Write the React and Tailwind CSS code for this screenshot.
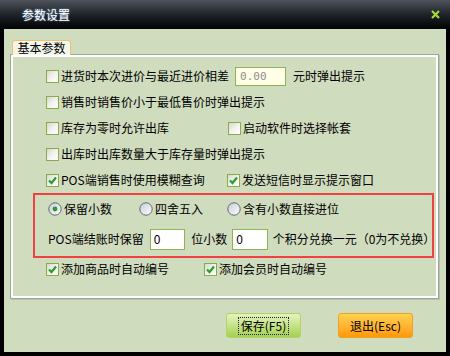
import React from 'react';

const font = "font-['Noto_Sans_CJK_SC','Noto_Sans',sans-serif]";

function Check({ checked }) {
  return (
    <span className="w-[13px] h-[13px] shrink-0 border border-[#86ad48] bg-linear-to-br from-[#d6d8cc] via-[#f2f2ee] to-white flex items-center justify-center">
      {checked && (
        <svg width="11" height="11" viewBox="0 0 11 11">
          <path d="M2 5.5 L4.5 8 L9 2.5" fill="none" stroke="#2c9c2c" strokeWidth="2.2" />
        </svg>
      )}
    </span>
  );
}

function Radio({ on }) {
  return (
    <svg width="14" height="14" viewBox="0 0 14 14" className="shrink-0">
      <defs>
        <linearGradient id="rg" x1="0" y1="0" x2="1" y2="1">
          <stop offset="0" stopColor="#c8ccd4" />
          <stop offset="1" stopColor="#ffffff" />
        </linearGradient>
      </defs>
      <circle cx="7" cy="7" r="6.2" fill="url(#rg)" stroke="#5c6878" strokeWidth="1" />
      {on && <circle cx="7" cy="7" r="2.4" fill="#2f9a2f" />}
    </svg>
  );
}

function CheckItem({ checked, label, className = '' }) {
  return (
    <div className={`flex items-center gap-[2px] ${className}`}>
      <Check checked={checked} />
      <span>{label}</span>
    </div>
  );
}

export default function App() {
  return (
    <div className={`w-[450px] h-[356px] bg-black flex flex-col text-[12px] leading-none text-black ${font}`}>
      {/* title bar */}
      <div className="h-[29px] shrink-0 flex items-center justify-between pl-[22px] pr-[10px] bg-linear-to-b from-[#4d535a] via-[#1f2429] to-[#030405]">
        <span className="text-white text-[12px] [text-shadow:0_0_2px_#8ab4e0]">参数设置</span>
        <svg width="9" height="9" viewBox="0 0 9 9">
          <path d="M1 1 L8 8 M8 1 L1 8" stroke="#a8d838" strokeWidth="2.2" />
        </svg>
      </div>

      {/* body */}
      <div className="flex-1 mx-[4px] mb-[4px] bg-[#d0dcbe] pt-[11px] pl-[6px] flex flex-col">
        <div className="relative z-10 ml-[2px] w-[59px] h-[15px] border border-b-0 border-[#f2bf6a] rounded-t-[3px] bg-[#f4f6ec] flex items-center justify-center">
          基本参数
        </div>
        <div className="-mt-[1px] w-[429px] h-[245px] border border-[#9ea69a] shadow-[1px_1px_0_#b8c0b0]">
          <div className="h-full border-2 border-white flex flex-col pt-[6px]">
            <div className="h-[26px] flex items-center pl-[33px]">
              <CheckItem label="进货时本次进价与最近进价相差" />
              <div className="ml-[6px] w-[51px] h-[19px] border border-[#8cb450] bg-[#ffffe8] flex items-center pl-[4px] text-[#8c8c8c] font-['DejaVu_Sans_Mono',monospace] text-[11px]">
                0.00
              </div>
              <span className="ml-[7px]">元时弹出提示</span>
            </div>
            <div className="h-[26px] flex items-center pl-[33px]">
              <CheckItem label="销售时销售价小于最低售价时弹出提示" />
            </div>
            <div className="h-[26px] flex items-center pl-[33px]">
              <CheckItem label="库存为零时允许出库" className="w-[182px]" />
              <CheckItem label="启动软件时选择帐套" />
            </div>
            <div className="h-[26px] flex items-center pl-[33px]">
              <CheckItem label="出库时出库数量大于库存量时弹出提示" />
            </div>
            <div className="h-[26px] flex items-center pl-[33px]">
              <CheckItem checked label="POS端销售时使用模糊查询" className="w-[181px]" />
              <CheckItem checked label="发送短信时显示提示窗口" />
            </div>

            {/* highlighted group */}
            <div className="ml-[20px] w-[401px] h-[65px] border-2 border-[#f04242] flex flex-col">
              <div className="h-[27px] flex items-center pl-[13px]">
                <div className="w-[91px] flex items-center gap-[2px]">
                  <Radio on />
                  <span>保留小数</span>
                </div>
                <div className="w-[88px] flex items-center gap-[2px]">
                  <Radio />
                  <span>四舍五入</span>
                </div>
                <div className="flex items-center gap-[2px]">
                  <Radio />
                  <span>含有小数直接进位</span>
                </div>
              </div>
              <div className="h-[34px] flex items-center pl-[13px]">
                <span className="w-[104px]">POS端结账时保留</span>
                <div className="w-[36px] h-[21px] border border-[#8cb450] bg-white flex items-center pl-[3px]">0</div>
                <span className="ml-[6px] w-[42px]">位小数</span>
                <div className="w-[36px] h-[21px] border border-[#8cb450] bg-white flex items-center pl-[3px]">0</div>
                <span className="ml-[5px]">个积分兑换一元（0为不兑换）</span>
              </div>
            </div>

            <div className="h-[22px] flex items-center pl-[33px]">
              <CheckItem checked label="添加商品时自动编号" className="w-[158px]" />
              <CheckItem checked label="添加会员时自动编号" />
            </div>
          </div>
        </div>

        {/* buttons */}
        <div className="mt-[14px] flex justify-end gap-[37px] pr-[33px]">
          <button className="w-[75px] h-[25px] rounded-[3px] border border-[#b2d46a] bg-linear-to-b from-[#e6f3bc] to-[#a6d04c] flex items-center justify-center">
            <span className="px-[2px] py-[2px] border border-dotted border-[#202040]">保存(F5)</span>
          </button>
          <button className="w-[75px] h-[25px] rounded-[3px] border border-[#eea226] bg-linear-to-b from-[#ffd24e] to-[#ff9800] flex items-center justify-center">
            退出(Esc)
          </button>
        </div>
      </div>
    </div>
  );
}
